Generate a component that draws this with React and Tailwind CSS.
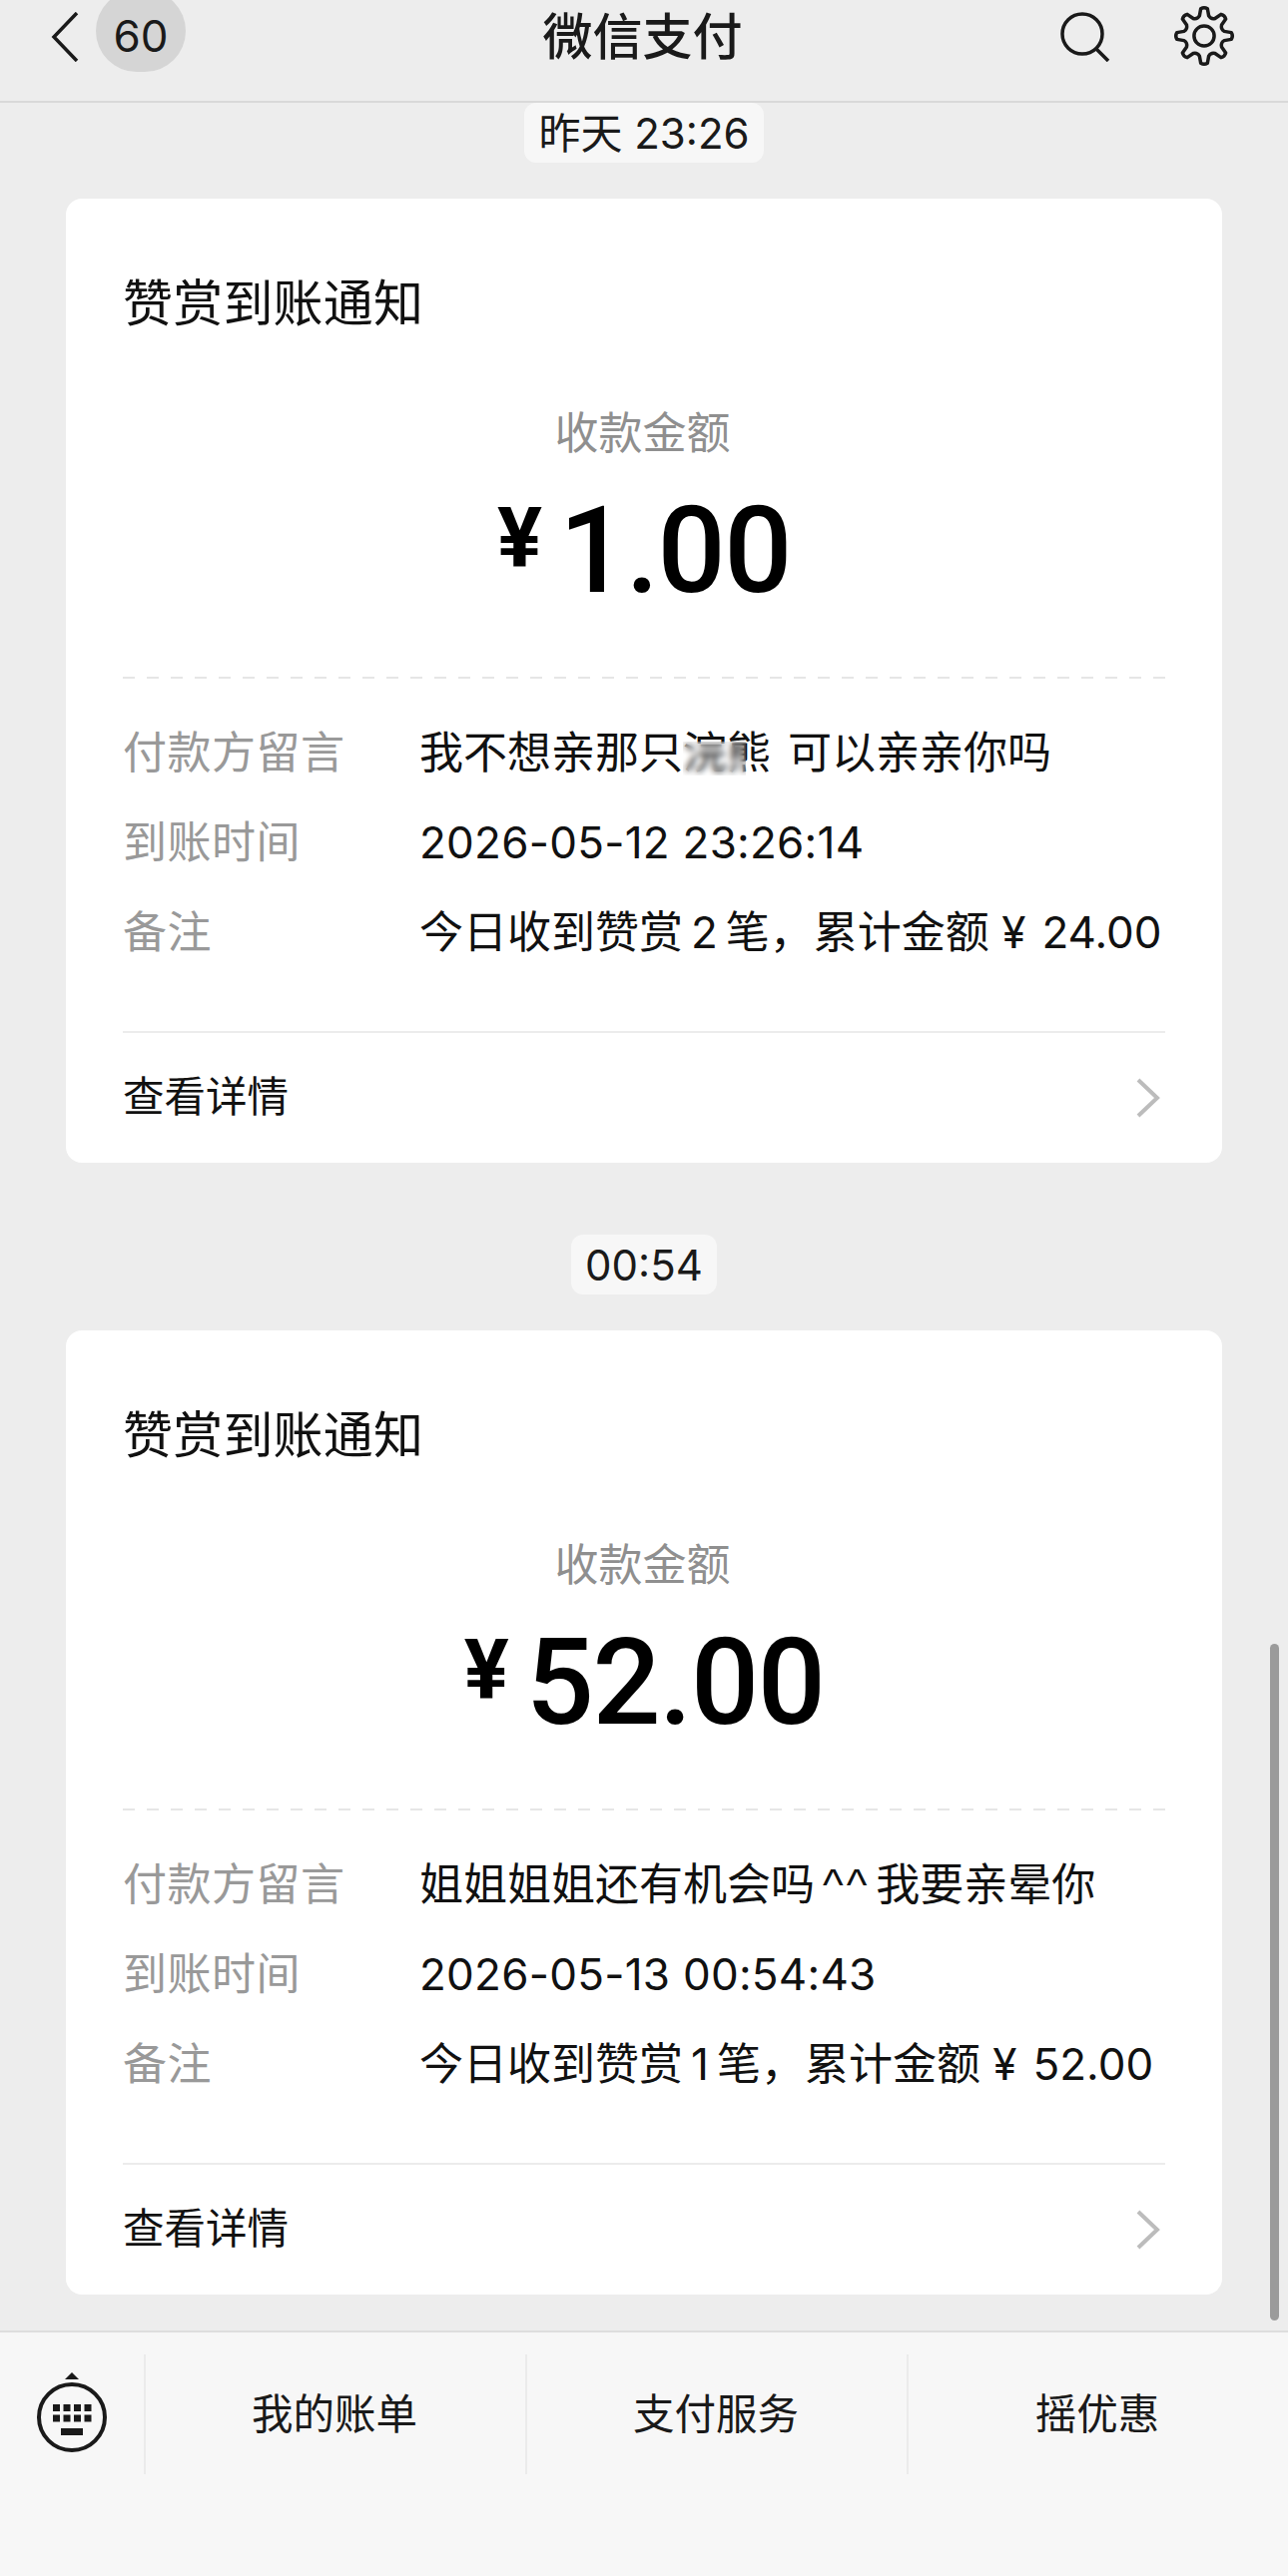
import React from 'react';

const cjk = 'font-["Inter","Noto_Sans_CJK_SC",sans-serif]';

function gearPath() {
  const pt = (deg, r) => {
    const a = ((deg - 90) * Math.PI) / 180;
    return (36 + r * Math.cos(a)).toFixed(2) + ' ' + (36 + r * Math.sin(a)).toFixed(2);
  };
  let d = '';
  for (let i = 0; i < 8; i++) {
    const a = i * 45;
    d += (i === 0 ? 'M' : 'Q') + (i === 0 ? '' : pt(a - 22.5, 19.5) + ' ') + pt(a - 13, 22.5);
    d += ' L' + pt(a - 7, 30) + ' Q' + pt(a, 32) + ' ' + pt(a + 7, 30) + ' L' + pt(a + 13, 22.5) + ' ';
  }
  return d + 'Q' + pt(-22.5, 19.5) + ' ' + pt(-13, 22.5) + ' Z';
}

function Chevron({ className }) {
  return (
    <svg viewBox="0 0 24 40" className={className} fill="none" stroke="#bcbcbc" strokeWidth="4">
      <path d="M2 2 L21 20 L2 38" />
    </svg>
  );
}

function Row({ label, children }) {
  return (
    <div className="flex h-[60px] items-center">
      <div className="w-[297px] shrink-0 tracking-[0.5px] text-[#999999]">{label}</div>
      <div className="whitespace-nowrap text-[#111111]">{children}</div>
    </div>
  );
}

function Receipt({ amount, message, time, note }) {
  return (
    <div className="mx-[66px] h-[966px] rounded-[16px] bg-white px-[57px] pt-[75px]">
      <div className="text-[50px] leading-[60px] tracking-[0.2px] text-[#111111]">赞赏到账通知</div>
      <div className="mt-[70px] pr-[3px] text-center text-[44px] leading-[60px] text-[#8f8f8f]">收款金额</div>
      <div className="mt-[23px] flex h-[130px] items-center justify-center font-['Roboto',sans-serif] font-medium text-black">
        <span className="mr-[17px] mb-[24px] text-[84px] leading-none font-bold">¥</span>
        <span className="text-[120px] leading-none tracking-[-1.5px]">{amount}</span>
      </div>
      <div className="mt-[61px] h-[2px] bg-[repeating-linear-gradient(90deg,#e6e6e6_0_12px,transparent_12px_24px)]"></div>
      <div className="mt-[44px] flex flex-col gap-[30px] text-[44px]">
        <Row label="付款方留言">{message}</Row>
        <Row label="到账时间"><span className="tracking-[0.25px]">{time}</span></Row>
        <Row label="备注">{note}</Row>
      </div>
      <div className="mt-[69px] flex h-[131px] items-center justify-between border-t-2 border-[#ececec] pr-[5px] text-[41.5px] text-[#111111]">
        <span>查看详情</span>
        <Chevron className="h-[40px] w-[24px]" />
      </div>
    </div>
  );
}

function KeyboardIcon() {
  const keys = [];
  for (let r = 0; r < 2; r++) {
    for (let c = 0; c < 4; c++) {
      keys.push(<rect key={r + '-' + c} x={17 + c * 10.5} y={32 + r * 10.5} width="7" height="7" />);
    }
  }
  return (
    <svg viewBox="0 0 72 80" className="h-[80px] w-[72px]" fill="#1a1a1a">
      <path d="M29 7 L36 0 L43 7 Z" />
      <circle cx="36" cy="45" r="33" fill="none" stroke="#1a1a1a" strokeWidth="4" />
      {keys}
      <rect x="25" y="56" width="22" height="7" />
    </svg>
  );
}

function Tab({ children }) {
  return (
    <div className="flex h-[120px] flex-1 items-center justify-center border-l-2 border-[#ebebeb] pr-[2px]">
      {children}
    </div>
  );
}

export default function App() {
  return (
    <div className={`flex h-[2581px] w-[1290px] flex-col overflow-hidden bg-[#ededed] ${cjk}`}>
      <header className="grid h-[103px] shrink-0 grid-cols-[1fr_auto_1fr] overflow-hidden border-b-2 border-[#d9d9d9]">
        <div className="flex items-start pl-[51px]">
          <svg viewBox="0 0 28 50" className="mt-[12px] h-[50px] w-[28px]" fill="none" stroke="#1a1a1a" strokeWidth="3.5">
            <path d="M26 1 L3 25 L26 49" />
          </svg>
          <div className="-mt-[10px] ml-[17px] flex h-[82px] w-[90px] items-center justify-center rounded-[45px] bg-[#d5d5d5] pt-[10px] text-[44px] text-[#1a1a1a]">
            60
          </div>
        </div>
        <div className="pt-[6px] pr-[3px] text-center text-[50px] leading-[62px] font-medium text-[#1a1a1a]">微信支付</div>
        <div className="flex items-start justify-end pr-[51px]">
          <svg viewBox="0 0 50 50" className="mt-[12px] h-[50px] w-[50px]" fill="none" stroke="#1a1a1a" strokeWidth="3.5">
            <circle cx="22" cy="22" r="20" />
            <path d="M36 37 L48 49" />
          </svg>
          <svg viewBox="0 0 72 72" className="mt-[3px] ml-[61px] h-[66px] w-[66px]" fill="none" stroke="#1a1a1a" strokeWidth="3.8" strokeLinejoin="round">
            <path d={gearPath()} />
            <circle cx="36" cy="36" r="11" />
          </svg>
        </div>
      </header>

      <main className="relative flex-1">
        <div className="flex justify-center">
          <div className="flex h-[60px] w-[240px] items-center justify-center rounded-[12px] bg-[#f7f7f7] text-[42px] text-[#1a1a1a]">昨天 23:26</div>
        </div>
        <div className="mt-[36px]">
          <Receipt
            amount="1.00"
            message={
              <span>
                我不想亲那只
                <span className="relative">
                  浣熊
                  <span className="absolute top-[30%] bottom-[8%] left-0 w-[72%] backdrop-blur-[3px]"></span>
                </span>
                <span className="ml-[17px]">可以亲亲你吗</span>
              </span>
            }
            time="2026-05-12 23:26:14"
            note={
              <span>
                今日收到赞赏<span className="mx-[8px]">2</span>笔，累计金额 ¥<span className="ml-[16px]">24.00</span>
              </span>
            }
          />
        </div>
        <div className="mt-[72px] flex justify-center">
          <div className="flex h-[60px] w-[146px] items-center justify-center rounded-[12px] bg-[#f7f7f7] text-[42px] text-[#1a1a1a]">00:54</div>
        </div>
        <div className="mt-[36px]">
          <Receipt
            amount="52.00"
            message={
              <span>
                姐姐姐姐还有机会吗
                <span className="mr-[6px] ml-[8px] font-['Liberation_Sans',sans-serif] font-light tracking-[3px]">^^</span>
                我要亲晕你
              </span>
            }
            time="2026-05-13 00:54:43"
            note={
              <span>
                今日收到赞赏<span className="mx-[8px]">1</span>笔，累计金额 ¥<span className="ml-[16px]">52.00</span>
              </span>
            }
          />
        </div>
        <div className="absolute top-[1544px] right-[9px] h-[678px] w-[9px] rounded-full bg-[#9b9b9b]"></div>
      </main>

      <footer className="h-[246px] shrink-0 border-t-2 border-[#dedede] bg-[#f7f7f7] pt-[22px]">
        <div className="flex text-[41.5px] text-[#1a1a1a]">
          <div className="flex h-[120px] w-[144px] shrink-0 justify-center pt-[18px]">
            <KeyboardIcon />
          </div>
          <Tab>我的账单</Tab>
          <Tab>支付服务</Tab>
          <Tab>摇优惠</Tab>
        </div>
      </footer>
    </div>
  );
}
